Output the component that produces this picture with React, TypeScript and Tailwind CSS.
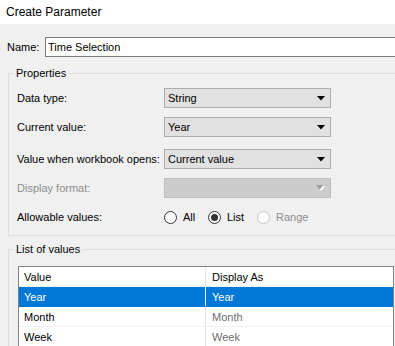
import React from "react";

const font = { fontFamily: '"Liberation Sans", Arial, sans-serif' };

function Arrow({ disabled }: { disabled?: boolean }) {
  if (disabled) {
    return (
      <svg width="9" height="6" viewBox="0 0 9 6" className="shrink-0">
        <polygon points="1.5,1 9,1 5.25,6" fill="#ffffff" />
        <polygon points="0,0 7.5,0 3.75,4.5" fill="#9e9e9e" />
      </svg>
    );
  }
  return (
    <svg width="8" height="5" viewBox="0 0 8 5" className="shrink-0">
      <polygon points="0,0 8,0 4,4.5" fill="#000000" />
    </svg>
  );
}

function Dropdown({ value, disabled }: { value?: string; disabled?: boolean }) {
  return (
    <div
      className={
        disabled
          ? "flex h-[20px] w-[167px] shrink-0 items-center justify-end border border-[#bfbfbf] bg-[#cccccc] pr-[5px]"
          : "flex h-[20px] w-[167px] shrink-0 items-center justify-between border border-[#adadad] bg-[#e1e1e1] pl-[3px] pr-[5px] text-black"
      }
    >
      {!disabled && <span>{value}</span>}
      <Arrow disabled={disabled} />
    </div>
  );
}

function Row({ label, children, muted, className = "" }: { label: string; children: React.ReactNode; muted?: boolean; className?: string }) {
  return (
    <div className={`flex h-[20px] items-center ${className}`}>
      <span className={`w-[155px] shrink-0 whitespace-nowrap pl-[8px] ${muted ? "text-[#8d8d8d]" : "text-black"}`}>{label}</span>
      {children}
    </div>
  );
}

function Radio({ label, checked, disabled, width }: { label: string; checked?: boolean; disabled?: boolean; width: string }) {
  return (
    <div className={`flex items-center gap-[6px] ${width}`}>
      <span
        className={`flex h-[13px] w-[13px] shrink-0 items-center justify-center rounded-full border ${
          disabled ? "border-[#c4c4c4] bg-white" : "border-[#333333] bg-white"
        }`}
      >
        {checked && <span className="h-[7px] w-[7px] rounded-full bg-[#333333]" />}
      </span>
      <span className={disabled ? "text-[#8d8d8d]" : "text-black"}>{label}</span>
    </div>
  );
}

const values = [
  { value: "Year", display: "Year", selected: true },
  { value: "Month", display: "Month" },
  { value: "Week", display: "Week" },
];

export default function App() {
  return (
    <div className="h-[346px] w-[395px] overflow-hidden bg-[#f0f0f0] text-[11px] leading-[14px]" style={font}>
      {/* Title bar */}
      <div className="flex h-[24px] items-center bg-white pl-[6px] text-[12px] text-black">Create Parameter</div>

      {/* Name */}
      <div className="mt-[13px] flex h-[20px] items-center">
        <span className="w-[45px] shrink-0 pl-[7px] text-black">Name:</span>
        <div className="flex h-[20px] w-[360px] shrink-0 items-center border border-[#7a7a7a] bg-white pl-[2px] text-black">
          Time Selection
        </div>
      </div>

      {/* Properties */}
      <fieldset className="ml-[8px] mt-[9px] w-[400px] border border-[#dcdcdc] pb-[8px]">
        <legend className="ml-[5px] px-[2px] text-black">Properties</legend>
        <Row label="Data type:" className="mt-[8px]">
          <Dropdown value="String" />
        </Row>
        <Row label="Current value:" className="mt-[9px]">
          <Dropdown value="Year" />
        </Row>
        <Row label="Value when workbook opens:" className="mt-[12px]">
          <Dropdown value="Current value" />
        </Row>
        <Row label="Display format:" muted className="mt-[9px]">
          <Dropdown disabled />
        </Row>
        <Row label="Allowable values:" className="mt-[9px]">
          <div className="flex items-center">
            <Radio label="All" width="w-[44px]" />
            <Radio label="List" checked width="w-[49px]" />
            <Radio label="Range" disabled width="w-[70px]" />
          </div>
        </Row>
      </fieldset>

      {/* List of values */}
      <fieldset className="ml-[8px] mt-[6px] h-[120px] w-[400px] border border-[#dcdcdc]">
        <legend className="ml-[5px] px-[2px] text-black">List of values</legend>
        <div className="ml-[9px] mt-[10px] w-[376px] border border-[#828282] bg-white">
          <div className="flex h-[20px] items-center border-b border-[#f0f0f0]">
            <div className="flex h-full w-[187px] items-center border-r border-[#e5e5e5] pl-[5px] text-black">Value</div>
            <div className="flex h-full flex-1 items-center pl-[6px] text-black">Display As</div>
          </div>
          {values.map((v) => (
            <div
              key={v.value}
              className={`flex h-[20px] items-center border-b ${v.selected ? "border-[#0078d7] bg-[#0078d7] text-white" : "border-[#f0f0f0] text-black"}`}
            >
              <div className={`flex h-full w-[187px] items-center border-r pl-[5px] ${v.selected ? "border-white" : "border-[#e5e5e5]"}`}>
                {v.value}
              </div>
              <div className={`flex h-full flex-1 items-center pl-[6px] ${v.selected ? "text-white" : "text-[#6d6d6d]"}`}>
                {v.display}
              </div>
            </div>
          ))}
        </div>
      </fieldset>
    </div>
  );
}
